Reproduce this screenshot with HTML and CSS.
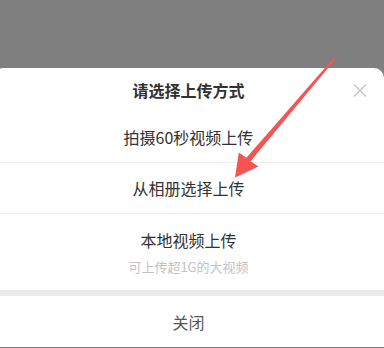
FILE: index.html
```html
<!DOCTYPE html>
<html lang="zh-CN">
<head>
<meta charset="utf-8">
<link rel="stylesheet" href="styles.css">
</head>
<body>
<div class="page">
  <div class="mask"></div>
  <div class="sheet">
    <div class="header">
      <span class="title">请选择上传方式</span>
      <svg class="close" viewBox="0 0 14 13" width="14" height="13">
        <path d="M1 0.5 L13 12.5 M13 0.5 L1 12.5" stroke="#c8c9cc" stroke-width="1.6" fill="none"/>
      </svg>
    </div>
    <div class="item">拍摄60秒视频上传</div>
    <div class="item">从相册选择上传</div>
    <div class="item item-sub">
      <span class="main">本地视频上传</span>
      <span class="sub">可上传超1G的大视频</span>
    </div>
    <div class="gap"></div>
    <div class="cancel">关闭</div>
  </div>
  <svg class="arrow" viewBox="0 0 384 348" width="384" height="348">
    <polygon points="335.8,58.7 250.6,161.2 258.5,166.5 235,177.5 238.8,152.6 246.4,157.8 334.2,57.3" fill="#f65454"/>
  </svg>
</div>
</body>
</html>
```

FILE: styles.css
```css
html, body {
  margin: 0;
  padding: 0;
}
body {
  width: 384px;
  height: 348px;
  overflow: hidden;
  background: #7f7f7f;
  font-family: "Noto Sans CJK SC", "Noto Sans", sans-serif;
}
.page {
  position: relative;
  width: 384px;
  height: 348px;
  overflow: hidden;
}
.mask {
  height: 68px;
  background: #7f7f7f;
}
.sheet {
  margin-left: -7px;
  width: 391px;
  background: #fff;
  border-radius: 10px 10px 0 0;
  overflow: hidden;
}
.header {
  position: relative;
  height: 44px;
  display: flex;
  align-items: center;
  justify-content: center;
}
.title {
  font-size: 16px;
  font-weight: 700;
  color: #323233;
  line-height: 20px;
}
.close {
  position: absolute;
  right: 17px;
  top: 16px;
}
.item {
  height: 50px;
  display: flex;
  align-items: center;
  justify-content: center;
  font-size: 16px;
  color: #323233;
  border-bottom: 1px solid #ebedf0;
}
.item-sub {
  height: auto;
  flex-direction: column;
  padding: 16px 0 15px;
  gap: 9px;
  border-bottom: none;
}
.main {
  line-height: 20px;
}
.sub {
  font-size: 13px;
  line-height: 16px;
  color: #c0c2c8;
}
.gap {
  height: 6px;
  background: #ebebed;
}
.cancel {
  height: 51px;
  display: flex;
  align-items: center;
  justify-content: center;
  font-size: 16px;
  color: #545456;
}
.arrow {
  position: absolute;
  left: 0;
  top: 0;
  pointer-events: none;
}
```
